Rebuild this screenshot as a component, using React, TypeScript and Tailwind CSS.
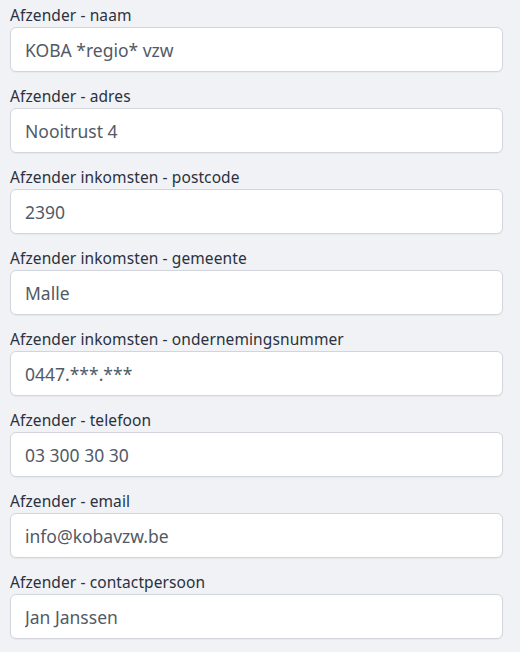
const fields = [
  { label: 'Afzender - naam', value: 'KOBA *regio* vzw' },
  { label: 'Afzender - adres', value: 'Nooitrust 4' },
  { label: 'Afzender inkomsten - postcode', value: '2390' },
  { label: 'Afzender inkomsten - gemeente', value: 'Malle' },
  { label: 'Afzender inkomsten - ondernemingsnummer', value: '0447.***.***' },
  { label: 'Afzender - telefoon', value: '03 300 30 30' },
  { label: 'Afzender - email', value: 'info@kobavzw.be' },
  { label: 'Afzender - contactpersoon', value: 'Jan Janssen' },
];

export default function App() {
  return (
    <div className="min-h-[652px] w-[520px] bg-[#f1f2f5] pl-[10px] pr-[17px] pt-[5px] font-['Noto_Sans',sans-serif]">
      {fields.map((f) => (
        <div key={f.label} className="mb-[14px]">
          <label className="mb-[2px] block text-[15.5px] leading-[20px] tracking-[0.1px] text-[#2a3140]">{f.label}</label>
          <input
            readOnly
            value={f.value}
            className="block h-[45px] w-full rounded-[6px] border border-[#d2d5db] bg-white px-[14px] text-[17.5px] text-[#525a66] outline-none shadow-[0_1px_1px_rgba(0,0,0,0.04)]"
          />
        </div>
      ))}
    </div>
  );
}
